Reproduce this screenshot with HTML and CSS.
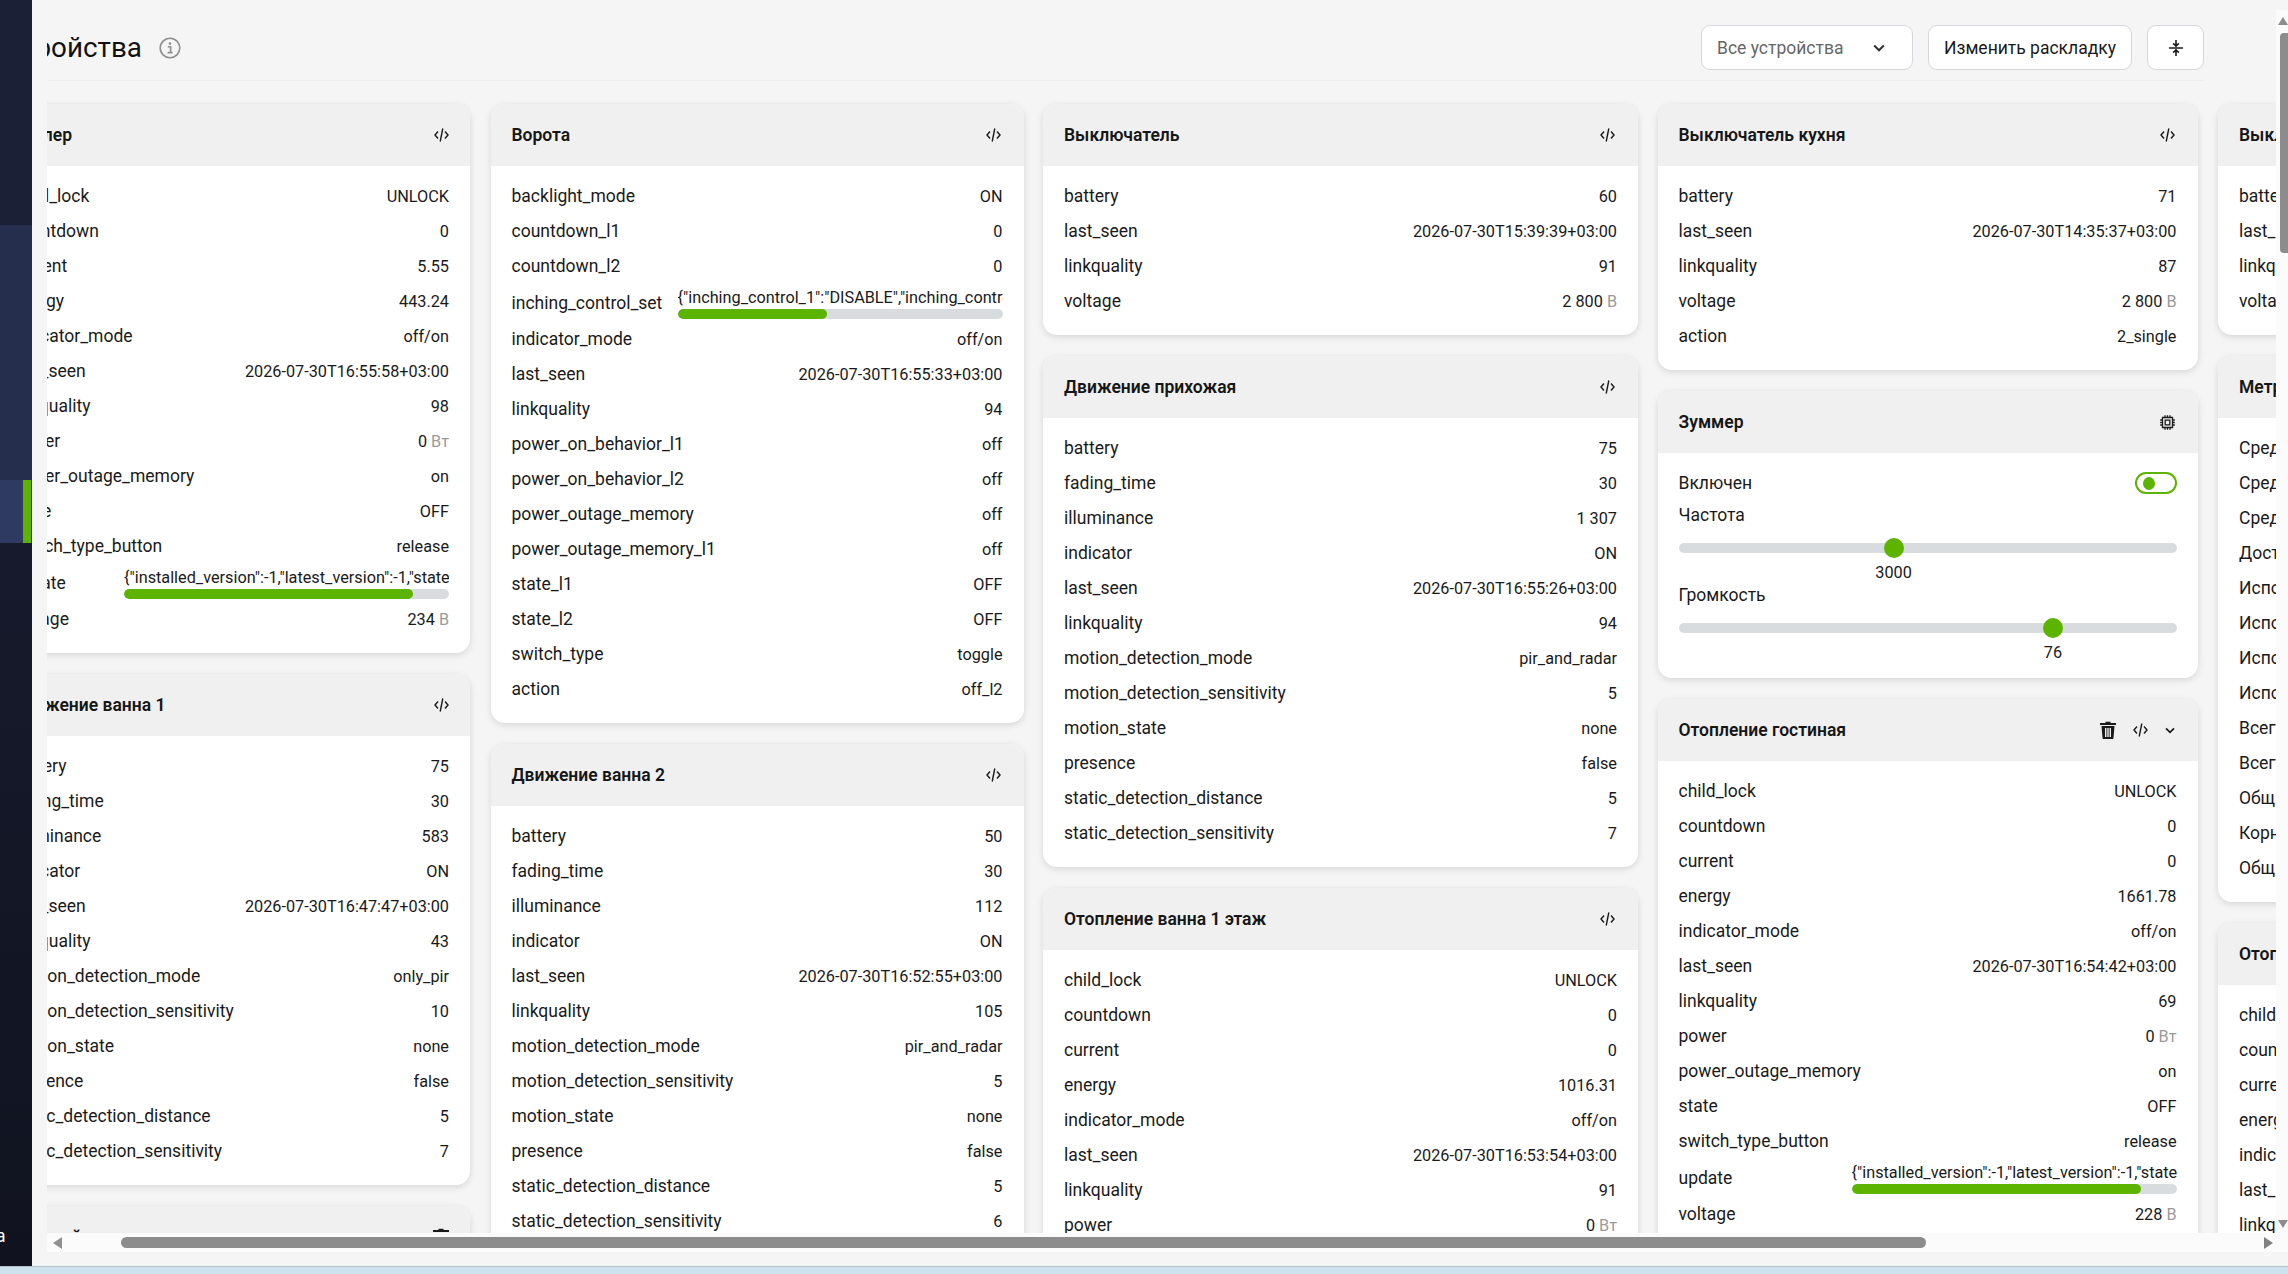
FILE: index.html
```html
<!DOCTYPE html>
<html lang="ru">
<head>
    <meta charset="UTF-8">
    <title>Устройства</title>
    <link rel="stylesheet" href="styles.css">
</head>
<body>
    <svg class="icon-defs" width="0" height="0">
        <symbol id="i-code" viewBox="0 0 15 14">
            <path d="M4 3.5 1 7l3 3.5M11 3.5 14 7l-3 3.5M8.8 .5 6.2 13.5" fill="none" stroke="currentColor" stroke-width="1.4"/>
        </symbol>
        <symbol id="i-chevron" viewBox="0 0 12 8">
            <path d="M1.2 1.5 6 6.3l4.8-4.8" fill="none" stroke="currentColor" stroke-width="2"/>
        </symbol>
        <symbol id="i-trash" viewBox="0 0 16 18">
            <path d="M5.5 2V.8h5V2H16v2H0V2zM1.5 5h13l-1 12a1 1 0 0 1-1 1h-9a1 1 0 0 1-1-1zM5 7v9h1.4V7zm2.3 0v9h1.4V7zm2.3 0v9H11V7z" fill="currentColor" fill-rule="evenodd"/>
        </symbol>
        <symbol id="i-chip" viewBox="0 0 15 15">
            <path d="M2.5 2.5h10v10h-10zM5.2 5.2h4.6v4.6H5.2zM5 .2v2.3M7.5 .2v2.3M10 .2v2.3M5 12.5v2.3M7.5 12.5v2.3M10 12.5v2.3M.2 5h2.3M.2 7.5h2.3M.2 10h2.3M12.5 5h2.3M12.5 7.5h2.3M12.5 10h2.3" fill="none" stroke="currentColor" stroke-width="1.3"/>
        </symbol>
    </svg>

    <div class="app">
        <aside class="sidebar">
            <div class="side-top"></div>
            <div class="side-group"></div>
            <div class="side-active"><span class="side-marker"></span></div>
            <div class="side-rest"><span class="side-user">а</span></div>
        </aside>

        <div class="main">
            <div class="main-row">
                <div class="viewport">
                    <div class="content">
                        <header class="page-header">
                            <div class="page-title">
                                <h1>Устройства</h1>
                                <svg class="info-icon" viewBox="0 0 22 22">
                                    <circle cx="11" cy="11" r="9.8" fill="none" stroke="currentColor" stroke-width="1.6"/>
                                    <circle cx="11" cy="6.6" r="1.3" fill="currentColor"/>
                                    <path d="M8.8 9.8h2.8v5.6M8.6 15.6h5" fill="none" stroke="currentColor" stroke-width="1.6"/>
                                </svg>
                            </div>
                            <div class="page-actions">
                                <div class="select">Все устройства
                                    <svg class="select-arrow"><use href="#i-chevron"/></svg>
                                </div>
                                <button class="btn">Изменить раскладку</button>
                                <button class="btn btn-icon">
                                    <svg width="14" height="16" viewBox="0 0 14 16">
                                        <path d="M0 8h14M7 0v5.5M7 10.5V16M4.2 3.4 7 6.2l2.8-2.8M4.2 12.6 7 9.8l2.8 2.8" fill="none" stroke="currentColor" stroke-width="1.6"/>
                                    </svg>
                                </button>
                            </div>
                        </header>

                        <div class="columns">
                            <!-- первая колонка -->
                            <div class="column col-1">
                                <section class="card">
                                    <div class="card-head"><h2>Бойлер</h2><div class="card-tools"><svg class="ic-code"><use href="#i-code"/></svg></div></div>
                                    <div class="card-body">
                                        <div class="row"><span>child_lock</span><span class="val">UNLOCK</span></div>
                                        <div class="row"><span>countdown</span><span class="val">0</span></div>
                                        <div class="row"><span>current</span><span class="val">5.55</span></div>
                                        <div class="row"><span>energy</span><span class="val">443.24</span></div>
                                        <div class="row"><span>indicator_mode</span><span class="val">off/on</span></div>
                                        <div class="row"><span>last_seen</span><span class="val">2026-07-30T16:55:58+03:00</span></div>
                                        <div class="row"><span>linkquality</span><span class="val">98</span></div>
                                        <div class="row"><span>power</span><span class="val">0 <i>Вт</i></span></div>
                                        <div class="row"><span>power_outage_memory</span><span class="val">on</span></div>
                                        <div class="row"><span>state</span><span class="val">OFF</span></div>
                                        <div class="row"><span>switch_type_button</span><span class="val">release</span></div>
                                        <div class="row row-long"><span>update</span>
                                            <div class="long-val">
                                                <div class="long-text">{"installed_version":-1,"latest_version":-1,"state":"idle"}</div>
                                                <div class="bar"><div class="bar-fill" style="width: 89%"></div></div>
                                            </div>
                                        </div>
                                        <div class="row"><span>voltage</span><span class="val">234 <i>В</i></span></div>
                                    </div>
                                </section>

                                <section class="card">
                                    <div class="card-head"><h2>Движение ванна 1</h2><div class="card-tools"><svg class="ic-code"><use href="#i-code"/></svg></div></div>
                                    <div class="card-body">
                                        <div class="row"><span>battery</span><span class="val">75</span></div>
                                        <div class="row"><span>fading_time</span><span class="val">30</span></div>
                                        <div class="row"><span>illuminance</span><span class="val">583</span></div>
                                        <div class="row"><span>indicator</span><span class="val">ON</span></div>
                                        <div class="row"><span>last_seen</span><span class="val">2026-07-30T16:47:47+03:00</span></div>
                                        <div class="row"><span>linkquality</span><span class="val">43</span></div>
                                        <div class="row"><span>motion_detection_mode</span><span class="val">only_pir</span></div>
                                        <div class="row"><span>motion_detection_sensitivity</span><span class="val">10</span></div>
                                        <div class="row"><span>motion_state</span><span class="val">none</span></div>
                                        <div class="row"><span>presence</span><span class="val">false</span></div>
                                        <div class="row"><span>static_detection_distance</span><span class="val">5</span></div>
                                        <div class="row"><span>static_detection_sensitivity</span><span class="val">7</span></div>
                                    </div>
                                </section>

                                <section class="card">
                                    <div class="card-head"><h2>Детский пол</h2><div class="card-tools"><svg class="ic-trash"><use href="#i-trash"/></svg></div></div>
                                </section>
                            </div>

                            <!-- вторая колонка -->
                            <div class="column col-2">
                                <section class="card">
                                    <div class="card-head"><h2>Ворота</h2><div class="card-tools"><svg class="ic-code"><use href="#i-code"/></svg></div></div>
                                    <div class="card-body">
                                        <div class="row"><span>backlight_mode</span><span class="val">ON</span></div>
                                        <div class="row"><span>countdown_l1</span><span class="val">0</span></div>
                                        <div class="row"><span>countdown_l2</span><span class="val">0</span></div>
                                        <div class="row row-long"><span>inching_control_set</span>
                                            <div class="long-val">
                                                <div class="long-text">{"inching_control_1":"DISABLE","inching_control_2":"DISABLE"}</div>
                                                <div class="bar"><div class="bar-fill" style="width: 46%"></div></div>
                                            </div>
                                        </div>
                                        <div class="row"><span>indicator_mode</span><span class="val">off/on</span></div>
                                        <div class="row"><span>last_seen</span><span class="val">2026-07-30T16:55:33+03:00</span></div>
                                        <div class="row"><span>linkquality</span><span class="val">94</span></div>
                                        <div class="row"><span>power_on_behavior_l1</span><span class="val">off</span></div>
                                        <div class="row"><span>power_on_behavior_l2</span><span class="val">off</span></div>
                                        <div class="row"><span>power_outage_memory</span><span class="val">off</span></div>
                                        <div class="row"><span>power_outage_memory_l1</span><span class="val">off</span></div>
                                        <div class="row"><span>state_l1</span><span class="val">OFF</span></div>
                                        <div class="row"><span>state_l2</span><span class="val">OFF</span></div>
                                        <div class="row"><span>switch_type</span><span class="val">toggle</span></div>
                                        <div class="row"><span>action</span><span class="val">off_l2</span></div>
                                    </div>
                                </section>

                                <section class="card">
                                    <div class="card-head"><h2>Движение ванна 2</h2><div class="card-tools"><svg class="ic-code"><use href="#i-code"/></svg></div></div>
                                    <div class="card-body">
                                        <div class="row"><span>battery</span><span class="val">50</span></div>
                                        <div class="row"><span>fading_time</span><span class="val">30</span></div>
                                        <div class="row"><span>illuminance</span><span class="val">112</span></div>
                                        <div class="row"><span>indicator</span><span class="val">ON</span></div>
                                        <div class="row"><span>last_seen</span><span class="val">2026-07-30T16:52:55+03:00</span></div>
                                        <div class="row"><span>linkquality</span><span class="val">105</span></div>
                                        <div class="row"><span>motion_detection_mode</span><span class="val">pir_and_radar</span></div>
                                        <div class="row"><span>motion_detection_sensitivity</span><span class="val">5</span></div>
                                        <div class="row"><span>motion_state</span><span class="val">none</span></div>
                                        <div class="row"><span>presence</span><span class="val">false</span></div>
                                        <div class="row"><span>static_detection_distance</span><span class="val">5</span></div>
                                        <div class="row"><span>static_detection_sensitivity</span><span class="val">6</span></div>
                                    </div>
                                </section>
                            </div>

                            <!-- третья колонка -->
                            <div class="column col-3">
                                <section class="card">
                                    <div class="card-head"><h2>Выключатель</h2><div class="card-tools"><svg class="ic-code"><use href="#i-code"/></svg></div></div>
                                    <div class="card-body">
                                        <div class="row"><span>battery</span><span class="val">60</span></div>
                                        <div class="row"><span>last_seen</span><span class="val">2026-07-30T15:39:39+03:00</span></div>
                                        <div class="row"><span>linkquality</span><span class="val">91</span></div>
                                        <div class="row"><span>voltage</span><span class="val">2 800 <i>В</i></span></div>
                                    </div>
                                </section>

                                <section class="card">
                                    <div class="card-head"><h2>Движение прихожая</h2><div class="card-tools"><svg class="ic-code"><use href="#i-code"/></svg></div></div>
                                    <div class="card-body">
                                        <div class="row"><span>battery</span><span class="val">75</span></div>
                                        <div class="row"><span>fading_time</span><span class="val">30</span></div>
                                        <div class="row"><span>illuminance</span><span class="val">1 307</span></div>
                                        <div class="row"><span>indicator</span><span class="val">ON</span></div>
                                        <div class="row"><span>last_seen</span><span class="val">2026-07-30T16:55:26+03:00</span></div>
                                        <div class="row"><span>linkquality</span><span class="val">94</span></div>
                                        <div class="row"><span>motion_detection_mode</span><span class="val">pir_and_radar</span></div>
                                        <div class="row"><span>motion_detection_sensitivity</span><span class="val">5</span></div>
                                        <div class="row"><span>motion_state</span><span class="val">none</span></div>
                                        <div class="row"><span>presence</span><span class="val">false</span></div>
                                        <div class="row"><span>static_detection_distance</span><span class="val">5</span></div>
                                        <div class="row"><span>static_detection_sensitivity</span><span class="val">7</span></div>
                                    </div>
                                </section>

                                <section class="card">
                                    <div class="card-head"><h2>Отопление ванна 1 этаж</h2><div class="card-tools"><svg class="ic-code"><use href="#i-code"/></svg></div></div>
                                    <div class="card-body">
                                        <div class="row"><span>child_lock</span><span class="val">UNLOCK</span></div>
                                        <div class="row"><span>countdown</span><span class="val">0</span></div>
                                        <div class="row"><span>current</span><span class="val">0</span></div>
                                        <div class="row"><span>energy</span><span class="val">1016.31</span></div>
                                        <div class="row"><span>indicator_mode</span><span class="val">off/on</span></div>
                                        <div class="row"><span>last_seen</span><span class="val">2026-07-30T16:53:54+03:00</span></div>
                                        <div class="row"><span>linkquality</span><span class="val">91</span></div>
                                        <div class="row"><span>power</span><span class="val">0 <i>Вт</i></span></div>
                                    </div>
                                </section>
                            </div>

                            <!-- четвертая колонка -->
                            <div class="column col-4">
                                <section class="card">
                                    <div class="card-head"><h2>Выключатель кухня</h2><div class="card-tools"><svg class="ic-code"><use href="#i-code"/></svg></div></div>
                                    <div class="card-body">
                                        <div class="row"><span>battery</span><span class="val">71</span></div>
                                        <div class="row"><span>last_seen</span><span class="val">2026-07-30T14:35:37+03:00</span></div>
                                        <div class="row"><span>linkquality</span><span class="val">87</span></div>
                                        <div class="row"><span>voltage</span><span class="val">2 800 <i>В</i></span></div>
                                        <div class="row"><span>action</span><span class="val">2_single</span></div>
                                    </div>
                                </section>

                                <section class="card">
                                    <div class="card-head"><h2>Зуммер</h2><div class="card-tools"><svg class="ic-chip"><use href="#i-chip"/></svg></div></div>
                                    <div class="card-body">
                                        <div class="row"><span>Включен</span><span class="toggle"><span class="toggle-knob"></span></span></div>
                                        <div class="slider-group">
                                            <div class="slider-label">Частота</div>
                                            <div class="slider"><div class="slider-track"></div><span class="slider-thumb" style="left: 43.2%"></span></div>
                                            <div class="slider-value"><span style="left: 43.2%">3000</span></div>
                                        </div>
                                        <div class="slider-group">
                                            <div class="slider-label">Громкость</div>
                                            <div class="slider"><div class="slider-track"></div><span class="slider-thumb" style="left: 75.2%"></span></div>
                                            <div class="slider-value"><span style="left: 75.2%">76</span></div>
                                        </div>
                                    </div>
                                </section>

                                <section class="card">
                                    <div class="card-head"><h2>Отопление гостиная</h2>
                                        <div class="card-tools">
                                            <svg class="ic-trash"><use href="#i-trash"/></svg>
                                            <svg class="ic-code"><use href="#i-code"/></svg>
                                            <svg class="ic-chevron"><use href="#i-chevron"/></svg>
                                        </div>
                                    </div>
                                    <div class="card-body">
                                        <div class="row"><span>child_lock</span><span class="val">UNLOCK</span></div>
                                        <div class="row"><span>countdown</span><span class="val">0</span></div>
                                        <div class="row"><span>current</span><span class="val">0</span></div>
                                        <div class="row"><span>energy</span><span class="val">1661.78</span></div>
                                        <div class="row"><span>indicator_mode</span><span class="val">off/on</span></div>
                                        <div class="row"><span>last_seen</span><span class="val">2026-07-30T16:54:42+03:00</span></div>
                                        <div class="row"><span>linkquality</span><span class="val">69</span></div>
                                        <div class="row"><span>power</span><span class="val">0 <i>Вт</i></span></div>
                                        <div class="row"><span>power_outage_memory</span><span class="val">on</span></div>
                                        <div class="row"><span>state</span><span class="val">OFF</span></div>
                                        <div class="row"><span>switch_type_button</span><span class="val">release</span></div>
                                        <div class="row row-long"><span>update</span>
                                            <div class="long-val">
                                                <div class="long-text">{"installed_version":-1,"latest_version":-1,"state":"idle"}</div>
                                                <div class="bar"><div class="bar-fill" style="width: 89%"></div></div>
                                            </div>
                                        </div>
                                        <div class="row"><span>voltage</span><span class="val">228 <i>В</i></span></div>
                                    </div>
                                </section>
                            </div>

                            <!-- пятая колонка, видна только узкой полосой -->
                            <div class="column col-5">
                                <section class="card">
                                    <div class="card-head"><h2>Выключатель коридор</h2></div>
                                    <div class="card-body">
                                        <div class="row"><span>battery</span></div>
                                        <div class="row"><span>last_seen</span></div>
                                        <div class="row"><span>linkquality</span></div>
                                        <div class="row"><span>voltage</span></div>
                                    </div>
                                </section>

                                <section class="card">
                                    <div class="card-head"><h2>Метрики</h2></div>
                                    <div class="card-body">
                                        <div class="row"><span>Среднее время</span></div>
                                        <div class="row"><span>Средняя нагрузка</span></div>
                                        <div class="row"><span>Средний отклик</span></div>
                                        <div class="row"><span>Доступно памяти</span></div>
                                        <div class="row"><span>Использование CPU</span></div>
                                        <div class="row"><span>Использование памяти</span></div>
                                        <div class="row"><span>Использование диска</span></div>
                                        <div class="row"><span>Использование сети</span></div>
                                        <div class="row"><span>Всего памяти</span></div>
                                        <div class="row"><span>Всего места</span></div>
                                        <div class="row"><span>Общий объем</span></div>
                                        <div class="row"><span>Корневой раздел</span></div>
                                        <div class="row"><span>Общий трафик</span></div>
                                    </div>
                                </section>

                                <section class="card">
                                    <div class="card-head"><h2>Отопление</h2></div>
                                    <div class="card-body">
                                        <div class="row"><span>child_lock</span></div>
                                        <div class="row"><span>countdown</span></div>
                                        <div class="row"><span>current</span></div>
                                        <div class="row"><span>energy</span></div>
                                        <div class="row"><span>indicator_mode</span></div>
                                        <div class="row"><span>last_seen</span></div>
                                        <div class="row"><span>linkquality</span></div>
                                    </div>
                                </section>
                            </div>
                        </div>
                    </div>
                </div>

                <div class="vscroll">
                    <span class="arrow-up"></span>
                    <span class="vscroll-thumb"></span>
                    <span class="arrow-down"></span>
                </div>
            </div>

            <div class="hscroll">
                <span class="arrow-left"></span>
                <span class="hscroll-thumb"></span>
                <span class="arrow-right"></span>
            </div>
        </div>
    </div>
    <div class="desktop-strip"></div>
</body>
</html>
```

FILE: styles.css
```css
:root {
    --green: #5cb300;
    --track: #d8dcdf;
    --page-bg: #f5f5f5;
    --head-bg: #f0f0f0;
    --text: #1a1a1a;
    --scroll: #8c8c8c;
}

* {
    box-sizing: border-box;
    margin: 0;
    padding: 0;
}

html, body {
    height: 100%;
    overflow: hidden;
}

body {
    display: flex;
    flex-direction: column;
    font-family: Roboto, "Liberation Sans", sans-serif;
    font-size: 17.5px;
    color: var(--text);
    background-color: var(--page-bg);
}

.icon-defs {
    position: absolute;
}

.app {
    flex: 1;
    min-height: 0;
    display: flex;
}

.desktop-strip {
    height: 8px;
    background-color: #cfe3ee;
    border-top: 1px solid #b4c2cc;
}

/* боковая панель */
.sidebar {
    width: 32px;
    flex-shrink: 0;
    display: flex;
    flex-direction: column;
    overflow: hidden;
    background-color: #141827;
}

.side-top {
    height: 225px;
    background-color: #1b2036;
}

.side-group {
    height: 255px;
    background-color: #262e4e;
}

.side-active {
    height: 63px;
    padding-right: 1px;
    display: flex;
    justify-content: flex-end;
    background-color: #2f3a63;
}

.side-marker {
    width: 8px;
    background-color: var(--green);
}

.side-rest {
    flex: 1;
    display: flex;
    align-items: flex-end;
    padding-bottom: 20px;
    background: linear-gradient(#161a2c, #10131f);
}

.side-user {
    margin-left: -4px;
    color: #fff;
    font-size: 17.5px;
}

/* основная область */
.main {
    flex: 1;
    min-width: 0;
    display: flex;
    flex-direction: column;
    padding-bottom: 14px;
    padding-left: 15px;
}

.main-row {
    flex: 1;
    min-height: 0;
    display: flex;
}

.viewport {
    flex: 1;
    min-width: 0;
    overflow: hidden;
}

.content {
    width: 2213px;
    margin-left: -56px;
}

.page-header {
    height: 81px;
    padding-top: 25px;
    display: flex;
    justify-content: space-between;
    align-items: flex-start;
    border-bottom: 1px solid #eeeeee;
}

.page-title {
    height: 45px;
    display: flex;
    align-items: center;
    gap: 17px;
}

h1 {
    font-size: 27.8px;
    font-weight: 400;
    color: #111;
}

.info-icon {
    width: 22px;
    height: 22px;
    color: #8f8f8f;
}

.page-actions {
    display: flex;
    gap: 15px;
}

.select, .btn {
    height: 45px;
    display: flex;
    align-items: center;
    background-color: #fff;
    border: 1px solid #d4d7db;
    border-radius: 9px;
    font-family: inherit;
    font-size: 17.5px;
    color: var(--text);
}

.select {
    width: 212px;
    padding: 0 27px 0 15px;
    justify-content: space-between;
    color: #666;
}

.select-arrow {
    width: 12px;
    height: 8px;
    color: #333;
}

.btn {
    padding: 0 15px;
}

.btn-icon {
    width: 57px;
    justify-content: center;
}

.columns {
    display: flex;
    align-items: flex-start;
    gap: 20.5px;
    margin-top: 23px;
}

.column {
    flex-shrink: 0;
    display: flex;
    flex-direction: column;
    gap: 21px;
}

.col-1 { width: 479px; }
.col-2 { width: 533px; }
.col-3 { width: 595px; margin-left: -1px; }
.col-4 { width: 540px; margin-left: -1px; }
.col-5 { width: 533px; }

/* карточка */
.card {
    background-color: #fff;
    border-radius: 14px;
    box-shadow: 0 2px 7px rgba(0, 0, 0, 0.13);
    overflow: hidden;
}

.card-head {
    height: 62px;
    padding: 0 23px 0 21px;
    display: flex;
    justify-content: space-between;
    align-items: center;
    background-color: var(--head-bg);
}

.col-1 .card-head {
    padding-right: 21.5px;
}

h2 {
    font-size: 17.5px;
    font-weight: 600;
    color: #161616;
}

.card-tools {
    display: flex;
    align-items: center;
    gap: 17px;
    color: #1a1a1a;
}

.ic-code {
    width: 15px;
    height: 14px;
}

.ic-trash {
    width: 16px;
    height: 18px;
}

.ic-chevron {
    width: 10px;
    height: 7px;
}

.ic-chip {
    width: 15px;
    height: 15px;
}

.card-body {
    padding: 12.5px 21px 16.5px;
}

.row {
    height: 35px;
    display: flex;
    justify-content: space-between;
    align-items: center;
    white-space: nowrap;
}

.val {
    font-size: 16.25px;
}

.val i {
    font-style: normal;
    color: #9a9a9a;
}

.row-long {
    height: 38px;
}

.long-val {
    width: 325px;
}

.long-text {
    height: 21.5px;
    overflow: hidden;
    font-size: 16.25px;
    line-height: 23px;
}

.bar {
    height: 10px;
    margin-top: 1.5px;
    border-radius: 5px;
    background-color: var(--track);
    overflow: hidden;
}

.bar-fill {
    height: 100%;
    border-radius: 5px;
    background-color: var(--green);
}

.toggle {
    width: 42px;
    height: 22px;
    padding-left: 6px;
    display: flex;
    align-items: center;
    border: 2px solid var(--green);
    border-radius: 11px;
}

.toggle-knob {
    width: 12px;
    height: 13px;
    border-radius: 50%;
    background-color: var(--green);
}

.slider-group {
    height: 80.5px;
}

.row + .slider-group {
    margin-top: -1px;
}

.slider-group:last-child {
    margin-bottom: 1px;
}

.slider-label {
    height: 31px;
    line-height: 31px;
}

.slider {
    position: relative;
    height: 34px;
    display: flex;
    align-items: center;
}

.slider-track {
    width: 100%;
    height: 10px;
    border-radius: 5px;
    background-color: var(--track);
}

.slider-thumb {
    position: absolute;
    top: 7px;
    width: 20px;
    height: 20px;
    margin-left: -10px;
    border-radius: 50%;
    background-color: var(--green);
}

.slider-value {
    position: relative;
    height: 15.5px;
    font-size: 16.25px;
    line-height: 15.5px;
}

.slider-value span {
    position: absolute;
    transform: translateX(-50%);
}

/* полосы прокрутки */
.vscroll {
    width: 12px;
    flex-shrink: 0;
    margin-top: 10px;
    padding-top: 7px;
    display: flex;
    flex-direction: column;
    align-items: flex-end;
    background-color: #fbfbfb;
}

.arrow-up {
    border-left: 5px solid transparent;
    border-right: 5px solid transparent;
    border-bottom: 8px solid var(--scroll);
}

.vscroll-thumb {
    width: 8px;
    height: 220px;
    margin-top: 8px;
    border-radius: 4px 0 0 4px;
    background-color: var(--scroll);
}

.arrow-down {
    margin-top: auto;
    margin-bottom: 5px;
    border-left: 5px solid transparent;
    border-right: 5px solid transparent;
    border-top: 8px solid var(--scroll);
}

.hscroll {
    height: 19px;
    display: flex;
    align-items: center;
    background-color: #fbfbfb;
}

.arrow-left {
    margin-left: 6px;
    border-top: 6px solid transparent;
    border-bottom: 6px solid transparent;
    border-right: 9px solid #909090;
}

.hscroll-thumb {
    width: 1805px;
    height: 11px;
    margin-left: 59px;
    border-radius: 6px;
    background-color: var(--scroll);
}

.arrow-right {
    margin-left: auto;
    margin-right: 15px;
    border-top: 6px solid transparent;
    border-bottom: 6px solid transparent;
    border-left: 9px solid #808080;
}
```
